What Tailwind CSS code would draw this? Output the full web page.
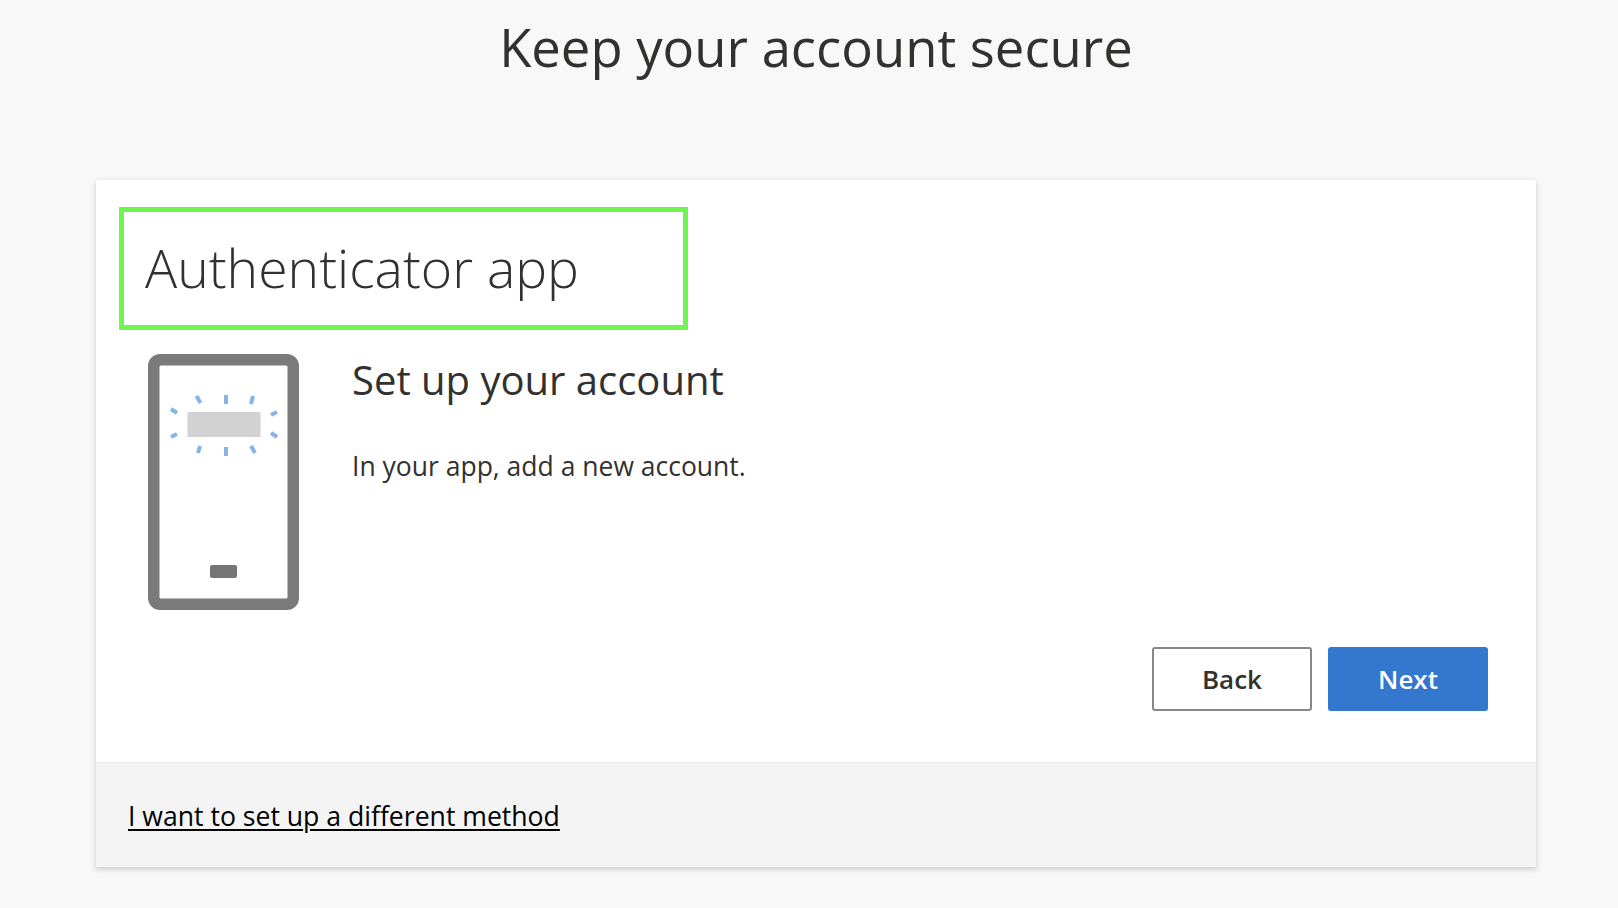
<!DOCTYPE html>
<html lang="en">
<head>
<meta charset="utf-8">
<title>Keep your account secure</title>
<script src="https://cdn.jsdelivr.net/npm/@tailwindcss/browser@4"></script>
</head>
<body class="bg-[#f8f8f8] font-['Open_Sans','Noto_Sans',sans-serif] text-[#323130] h-[908px] overflow-hidden">
  <h1 class="h-[180px] pt-[13px] pl-[14px] text-center text-[52.6px] leading-[68px] font-normal">Keep your account secure</h1>
  <main class="mx-[96px] w-[1440px] h-[687px] bg-white shadow-[0_2px_6px_rgba(0,0,0,0.2)] flex flex-col">
    <div class="flex-1 flex flex-col pt-[27px]">
      <div class="ml-[23px] w-[569px] h-[123px] border-[5px] border-[#6ff450] flex items-center pl-[21px]">
        <h2 class="text-[53.5px] leading-[68px] -mt-[2px] font-light">Authenticator app</h2>
      </div>
      <div class="flex mt-[24px] pl-[52px]">
        <svg class="w-[151px] h-[256px] shrink-0 blur-[0.6px]" viewBox="0 0 151 256" fill="none">
          <path fill="#7a7a7a" fill-rule="evenodd" d="M12 0H139A12 12 0 0 1 151 12V244A12 12 0 0 1 139 256H12A12 12 0 0 1 0 244V12A12 12 0 0 1 12 0ZM14 11.500A2 2 0 0 0 11.500 14V242A2 2 0 0 0 14 244.500H137A2 2 0 0 0 139.500 242V14A2 2 0 0 0 137 11.500Z"/>
          <rect x="39.500" y="58" width="73" height="25" fill="#d2d2d2"/>
          <g stroke="#85b5e8" stroke-width="4">
            <path d="M48.500 42l4 7M78 41v9M105 42l-2 8M23 55l6 4M123 61l6-3M23 83l6-3M123 79l6 4M52 92l-2 7M78 93v9M103 92l4 7"/>
          </g>
          <rect x="62" y="211" width="27" height="13" rx="2" fill="#757575"/>
        </svg>
        <div class="ml-[53px]">
          <h3 class="text-[40px] leading-[52px] font-normal">Set up your account</h3>
          <p class="mt-[42px] text-[26.5px] leading-[36px]">In your app, add a new account.</p>
        </div>
      </div>
      <div class="flex justify-end gap-[16px] mt-[37px] pr-[48px]">
        <button class="w-[160px] h-[64px] pt-[1px] rounded-[3px] border-2 border-[#8a8886] bg-white text-[26px] font-semibold text-[#323130]">Back</button>
        <button class="w-[160px] h-[64px] pt-[1px] rounded-[3px] bg-[#3477ce] text-[26px] font-semibold text-white">Next</button>
      </div>
    </div>
    <footer class="h-[105px] pt-[4px] bg-[#f4f4f4] border-t border-[#e8e8e8] flex items-center pl-[32px]">
      <a href="#" class="text-[26.6px] text-black underline underline-offset-[3px]">I want to set up a different method</a>
    </footer>
  </main>
</body>
</html>
